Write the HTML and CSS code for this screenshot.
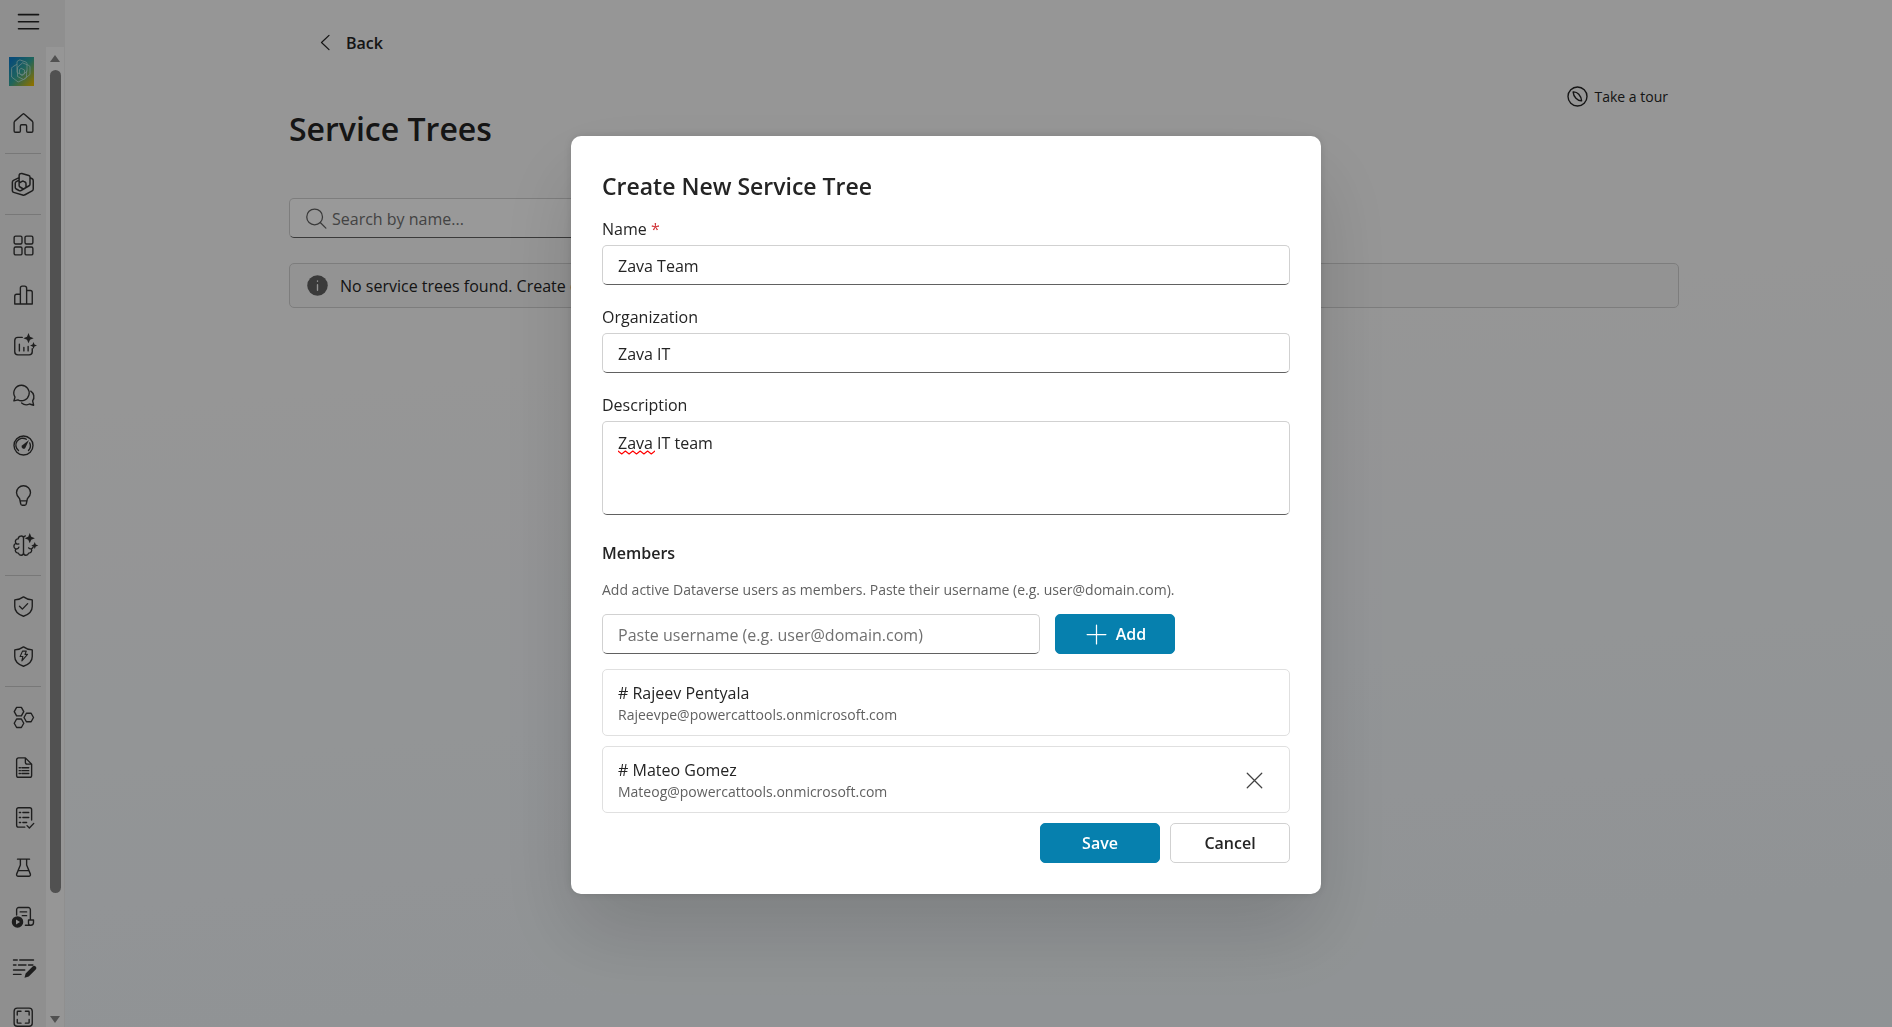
FILE: index.html
```html
<!DOCTYPE html>
<html lang="en">

<head>
    <meta charset="UTF-8">
    <meta name="viewport" content="width=device-width, initial-scale=1.0">
    <title>Service Trees</title>
    <link rel="stylesheet" href="styles.css">
</head>

<body>
    <div class="app">
        <nav class="rail" aria-label="Main">
            <button class="rail-menu" type="button" aria-label="Menu">
                <svg class="icon" viewBox="0 0 20 20"><path d="M2 4.500h16M2 10.200h16M2 15.800h16" stroke-width="1.300"/></svg>
            </button>
            <div class="rail-body">
                <div class="rail-items">
                    <a class="rail-item rail-logo" href="#" aria-label="App">
                        <svg class="logo" viewBox="0 0 25 29">
                            <defs>
                                <linearGradient id="logoFill" x1="0" y1="0" x2="1" y2="1">
                                    <stop offset="0.1" stop-color="#0f7fc8"/>
                                    <stop offset="0.5" stop-color="#35a89a"/>
                                    <stop offset="0.95" stop-color="#e8bc00"/>
                                </linearGradient>
                            </defs>
                            <rect width="25" height="29" fill="url(#logoFill)" stroke="none"/>
                            <path d="M9.500 3.500q1-.8 2-.4l5.500 2q1 .4 1 1.400v8l-5 3.500-5-2.500V5zM14 6l6 2.500q1 .5 1 1.500v7.500l-6.500 5-6-3V11q0-1 .8-1.600zM7.500 7.500L3.500 10q-.9.600-.9 1.600V20l6.500 5 7.500-3.500q.9-.5.900-1.500v-6M12.500 11.500l3 1.500v4l-2.500 1.500-2.500-2v-3.500z" stroke="#b5e2dc" stroke-width="0.8"/>
                        </svg>
                    </a>
                    <a class="rail-item" href="#" aria-label="Home">
                        <svg class="icon" viewBox="0 0 20 20"><path d="M9.300 2.600a1 1 0 0 1 1.400 0l6.300 5.500c.3.300.5.700.5 1.100V16a1 1 0 0 1-1 1h-3a1 1 0 0 1-1-1v-4a1 1 0 0 0-1-1h-3a1 1 0 0 0-1 1v4a1 1 0 0 1-1 1h-3a1 1 0 0 1-1-1V9.200c0-.4.2-.8.5-1.100z"/></svg>
                    </a>
                    <hr class="rail-line">
                    <a class="rail-item rail-left" href="#" aria-label="Copilot Studio">
                        <svg class="icon" viewBox="0 0 20 20"><path stroke-width="1.200" d="M9.500 1.200l5.500 1.600q1 .3 1 1.300v5.600q0 .9-.7 1.300l-3.800 2.200q-.8.400-1.500 0L8 12q-.7-.4-.7-1.200V3q0-2 2.200-1.800zM16 4.500l1.700.9q.9.500.9 1.500v6.700q0 1-.9 1.500L12 18.200q-.9.500-1.900.2L2.900 16.300q-1-.3-1-1.300V8.200q0-1 .9-1.500l4.500-2.200M7.300 6.500L5 7.700q-.8.400-.8 1.300v3.300q0 .9.800 1.300l2.200 1.200q.8.400 1.600 0l3.200-1.700q.8-.4.800-1.300V9.300q0-.9-.8-1.300l-1-.5q-.7-.4-1.400 0l-2.300 1.300"/></svg>
                    </a>
                    <hr class="rail-line">
                    <a class="rail-item" href="#" aria-label="Dashboard">
                        <svg class="icon" viewBox="0 0 20 20"><rect x="2.500" y="2.500" width="6.300" height="6.300" rx="1.200"/><rect x="11.200" y="2.500" width="6.300" height="6.300" rx="1.200"/><rect x="2.500" y="11.200" width="6.300" height="6.300" rx="1.200"/><rect x="11.200" y="11.200" width="6.300" height="6.300" rx="1.200"/></svg>
                    </a>
                    <a class="rail-item" href="#" aria-label="Analytics">
                        <svg class="icon" viewBox="0 0 20 20"><path d="M7.500 16.800V4a1.500 1.500 0 0 1 1.500-1.500h2A1.500 1.500 0 0 1 12.500 4v12.800M7.500 9H4.500A1.500 1.500 0 0 0 3 10.500v6.300h14V7.500A1.500 1.500 0 0 0 15.500 6h-3"/></svg>
                    </a>
                    <a class="rail-item" href="#" aria-label="Insights">
                        <svg class="icon" viewBox="0 0 20 20"><path d="M9 3.500H5.500A2.500 2.500 0 0 0 3 6v9a2.500 2.500 0 0 0 2.500 2.500h9A2.500 2.500 0 0 0 17 15v-2.500M6.700 9v5.300M10.300 11.500v2.800M13.700 10.700v3.600"/><path class="solid" d="M14 0l1.200 2.900 2.900 1.200-2.900 1.200L14 8.200l-1.200-2.900-2.900-1.200 2.900-1.200zM18 7.200l.8 2 2 .8-2 .8-.8 2-.8-2-2-.8 2-.8z"/></svg>
                    </a>
                    <a class="rail-item" href="#" aria-label="Conversations">
                        <svg class="icon" viewBox="0 0 20 20"><path d="M8.500 1.800a6.200 6.200 0 1 1-3 11.700l-3.200.8.900-3A6.200 6.200 0 0 1 8.500 1.800zM15.800 6.500a5.500 5.500 0 0 1 1.500 7.800l.8 3.500-3.300-1a5.800 5.800 0 0 1-6.300-.8"/></svg>
                    </a>
                    <a class="rail-item" href="#" aria-label="Performance">
                        <svg class="icon" viewBox="0 0 20 20"><circle cx="10" cy="10" r="7.600"/><path d="M6 14a5.500 5.500 0 0 1 6.300-9M15 8a5.500 5.500 0 0 1-1 6"/><path class="solid" d="M14.400 5.600l-3 6.300a1.500 1.500 0 0 1-2.600-1.900z"/></svg>
                    </a>
                    <a class="rail-item" href="#" aria-label="Ideas">
                        <svg class="icon" viewBox="0 0 20 20"><path d="M10 2.200a5.600 5.600 0 0 1 5.600 5.600c0 1.900-1 3.300-2.500 4.800l-.9 4.200a1.200 1.200 0 0 1-1.200 1H9a1.200 1.200 0 0 1-1.200-1l-.9-4.200C5.400 11.100 4.400 9.700 4.400 7.800A5.600 5.600 0 0 1 10 2.200zM7.300 14.300h5.400"/></svg>
                    </a>
                    <a class="rail-item" href="#" aria-label="AI">
                        <svg class="icon" viewBox="0 0 20 20"><path d="M10 3.800C9.500 1.800 6 2 5.700 4.700 3.500 4.700 3 7 4 8.300 1.800 9 1.800 12 3.700 12.700c-.8 1.900.4 3.500 2.200 3.400.8 2.400 4.100 2.200 4.100-.4zM10 15.700c0 2.600 3.300 2.800 4.100.4 1.800.1 3-1.500 2.200-3.400.8-.3 1.300-.9 1.500-1.700M10 3.800c.2-.8.800-1.300 1.500-1.500M4 8.300c.6.500 1.500.7 2.300.4M3.700 12.700c1.200.2 2.300-.3 2.600-1.400M16.300 12.700c-.9.100-1.700-.2-2.200-.8"/><path class="solid" d="M15 0l1.200 2.900 2.900 1.200-2.900 1.200L15 8.200l-1.200-2.900-2.900-1.200 2.900-1.200zM19 7.200l.8 2 2 .8-2 .8-.8 2-.8-2-2-.8 2-.8z"/></svg>
                    </a>
                    <hr class="rail-line">
                    <a class="rail-item" href="#" aria-label="Security">
                        <svg class="icon" viewBox="0 0 20 20"><path d="M10 2.300c2 1.500 4.300 2.200 7 2.400V10c0 4-2.500 6.300-7 7.800C5.500 16.300 3 14 3 10V4.700c2.700-.2 5-.9 7-2.400zM6.800 9.800l2.300 2.300 4.200-4.400"/></svg>
                    </a>
                    <a class="rail-item" href="#" aria-label="Threats">
                        <svg class="icon" viewBox="0 0 20 20"><path d="M10 2.300c2 1.500 4.300 2.200 7 2.400V10c0 4-2.500 6.300-7 7.800C5.500 16.300 3 14 3 10V4.700c2.700-.2 5-.9 7-2.400z"/><path stroke-width="0.9" d="M9.200 5.700h3l-1 2.600h2l-4.500 5.200.8-3.500H7.300z"/></svg>
                    </a>
                    <hr class="rail-line">
                    <a class="rail-item" href="#" aria-label="Environments">
                        <svg class="icon" viewBox="0 0 20 20"><path d="M4.500 1.900h3.800l1.900 3.400-1.900 3.400H4.500L2.600 5.300zM4.500 11.200h3.800l1.900 3.400-1.900 3.400H4.500l-1.900-3.400zM12.300 6.600h3.800L18 10l-1.900 3.400h-3.800L10.400 10z"/></svg>
                    </a>
                    <a class="rail-item" href="#" aria-label="Documents">
                        <svg class="icon" viewBox="0 0 20 20"><path d="M11.500 2.300H6A1.500 1.500 0 0 0 4.500 3.800v12.500A1.500 1.500 0 0 0 6 17.800h9a1.500 1.500 0 0 0 1.500-1.500V7.300zM11.500 2.300v3.500A1.500 1.500 0 0 0 13 7.300h3.500M6.500 10.200h1M6.500 12.500h1M6.500 14.800h1M8.700 10.200h5.500M8.700 12.500h5.500M8.700 14.800h5.500"/></svg>
                    </a>
                    <a class="rail-item" href="#" aria-label="Tasks">
                        <svg class="icon" viewBox="0 0 20 20"><path d="M16.500 12V3.700A1.500 1.500 0 0 0 15 2.200H6a1.500 1.500 0 0 0-1.500 1.500v12.500A1.500 1.500 0 0 0 6 17.700h5M6.700 6h1M6.700 10h1M6.700 14h1M9.500 6h4.700M9.500 10h4.700M9.500 14h3M12.800 16.500l1.900 1.900 3.500-3.700"/></svg>
                    </a>
                    <a class="rail-item" href="#" aria-label="Experiments">
                        <svg class="icon" viewBox="0 0 20 20"><path d="M5.200 3.300h9.600M7.500 3.300V8l-3 7.300A1.300 1.300 0 0 0 5.700 17h8.600a1.300 1.300 0 0 0 1.200-1.700l-3-7.300V3.300M5.900 12.500h8.200"/></svg>
                    </a>
                    <a class="rail-item" href="#" aria-label="Runs">
                        <svg class="icon" viewBox="0 0 20 20"><path d="M4.500 8V3.700A1.700 1.700 0 0 1 6.200 2h7.600a1.700 1.700 0 0 1 1.700 1.700V12M7.300 5.500h5.200M9 8.500h3.500M11.500 16.200h4.300a2.200 2.200 0 0 0 2.200-2.200V12h-4v2.500a1.700 1.700 0 0 0 1.800 1.700"/><circle class="solid" cx="5.200" cy="13.500" r="4.600"/><path class="play" d="M4 11.500v4l3.200-2z"/></svg>
                    </a>
                    <a class="rail-item" href="#" aria-label="Prompts">
                        <svg class="icon" viewBox="0 0 20 20"><path d="M2 4h3M7 4h11M2 8h2M6 8h6M14 8h3.500M2 12h9M2 15.500h6"/><path class="solid" d="M17.300 9.200a1.700 1.700 0 0 1 2.500 2.400l-5.600 5.600-3.400 1 .9-3.400z"/></svg>
                    </a>
                    <a class="rail-item" href="#" aria-label="Solutions">
                        <svg class="icon" viewBox="0 0 20 20"><rect x="2.500" y="2.500" width="14.500" height="14.500" rx="2.500"/><path d="M5 8V5.500a.5.500 0 0 1 .5-.5H8M11.500 5H14a.5.500 0 0 1 .5.500V8M14.500 11.500V14a.5.500 0 0 1-.5.500h-2.500M8 14.500H5.500A.5.500 0 0 1 5 14v-2.500"/></svg>
                    </a>
                </div>
                <div class="scrollbar" aria-hidden="true">
                    <span class="arrow-up"></span>
                    <span class="thumb"></span>
                    <span class="arrow-down"></span>
                </div>
            </div>
        </nav>

        <main class="main">
            <div class="page">
                <button class="back" type="button">
                    <svg class="icon" viewBox="0 0 20 20"><path d="M12 4.300L6 10l6 5.700" stroke-width="1"/></svg>
                    Back
                </button>
                <button class="tour" type="button">
                    <svg class="icon" viewBox="0 0 20 20"><circle cx="10" cy="10" r="7.600"/><path d="M6.500 6.300c3.500-.3 6.300 3 6.800 7.200-3.400.2-6.500-3.200-6.800-7.200z"/></svg>
                    Take a tour
                </button>
                <h1 class="page-title">Service Trees</h1>
                <label class="search">
                    <svg class="icon" viewBox="0 0 20 20"><circle cx="8.500" cy="8.700" r="6.300" stroke-width="1"/><path d="M13 13.200l4.500 4.500" stroke-width="1"/></svg>
                    <input type="search" placeholder="Search by name..." aria-label="Search by name">
                </label>
                <div class="message">
                    <svg class="icon" viewBox="0 0 20 20"><circle class="solid" cx="10" cy="10" r="8.200"/><path class="info" d="M10 9.300v4.500M10 6.300v.3"/></svg>
                    No service trees found. Create one to get started.
                </div>
            </div>
        </main>
    </div>

    <div class="overlay">
        <form class="dialog" role="dialog" aria-labelledby="dialogTitle" onsubmit="event.preventDefault();">
            <h2 class="dialog-title" id="dialogTitle">Create New Service Tree</h2>

            <div class="field">
                <label for="name">Name <span class="required">*</span></label>
                <input class="input" type="text" id="name" value="Zava Team" spellcheck="false">
            </div>
            <div class="field">
                <label for="organization">Organization</label>
                <input class="input" type="text" id="organization" value="Zava IT" spellcheck="false">
            </div>
            <div class="field field-area">
                <label for="description">Description</label>
                <textarea class="input" id="description" spellcheck="false">Zava IT team</textarea>
                <svg class="squiggle" viewBox="0 0 37 5" aria-hidden="true"><path d="M0 1l3.700 3 3.700-3 3.700 3 3.700-3 3.700 3 3.700-3 3.700 3 3.700-3 3.700 3 3.700-3"/></svg>
            </div>

            <h3 class="members-title">Members</h3>
            <label class="hint" for="username">Add active Dataverse users as members. Paste their username (e.g. user@domain.com).</label>
            <div class="add-row">
                <input class="input" type="text" id="username" placeholder="Paste username (e.g. user@domain.com)">
                <button class="btn btn-primary" type="button">
                    <svg class="icon" viewBox="0 0 20 20"><path d="M10 2.500v15M2.500 10h15" stroke-width="1"/></svg>
                    Add
                </button>
            </div>

            <ul class="members">
                <li class="member">
                    <div>
                        <div class="member-name"># Rajeev Pentyala</div>
                        <div class="member-mail">Rajeevpe@powercattools.onmicrosoft.com</div>
                    </div>
                </li>
                <li class="member">
                    <div>
                        <div class="member-name"># Mateo Gomez</div>
                        <div class="member-mail">Mateog@powercattools.onmicrosoft.com</div>
                    </div>
                    <button class="remove" type="button" aria-label="Remove Mateo Gomez">
                        <svg class="icon" viewBox="0 0 20 20"><path d="M4.200 4.200l11.600 11.600M15.800 4.200L4.200 15.800" stroke-width="1"/></svg>
                    </button>
                </li>
            </ul>

            <div class="actions">
                <button class="btn btn-primary" type="submit">Save</button>
                <button class="btn" type="button">Cancel</button>
            </div>
        </form>
    </div>
</body>

</html>
```
FILE: styles.css
```css
* {
    box-sizing: border-box;
}

body {
    margin: 0;
    font-family: "Open Sans", "Noto Sans", sans-serif;
    font-size: 16px;
    line-height: 24px;
    color: #242424;
    overflow: hidden;
}

button, input, textarea {
    font: inherit;
    color: inherit;
    margin: 0;
}

button {
    border: none;
    background: none;
    padding: 0;
    cursor: pointer;
}

.icon {
    width: 25px;
    height: 25px;
    flex: none;
    overflow: visible;
}

svg {
    fill: none;
    stroke: currentColor;
    stroke-width: 1.1;
    stroke-linecap: round;
    stroke-linejoin: round;
}

svg .solid {
    fill: currentColor;
    stroke-width: 0;
}

svg .play {
    fill: #eee;
    stroke: none;
}

svg .info {
    stroke: #f5f5f5;
}

.app {
    display: flex;
    height: 100vh;
    background: linear-gradient(175deg, #fafafa 35%, #f5f8fb 65%, #eff5f8 100%);
}

/* left navigation */
.rail {
    width: 65px;
    flex: none;
    display: flex;
    flex-direction: column;
    background: #eee;
}

.rail-menu {
    height: 47px;
    flex: none;
    padding: 0 0 4px 16px;
    display: flex;
    align-items: center;
}

.rail-body {
    flex: 1;
    min-height: 0;
    display: flex;
}

.rail-items {
    flex: 1;
    overflow: hidden;
}

.rail-item {
    display: flex;
    align-items: center;
    height: 50px;
    padding-left: 11px;
    color: #333;
}

.rail-logo {
    height: 51px;
    padding: 0 0 3px 9px;
}

.rail-left {
    padding-left: 10px;
}

.logo {
    width: 25px;
    height: 29px;
}

.rail-line {
    height: 1px;
    margin: 5px;
    border: none;
    background: #c8c8c8;
}

.scrollbar {
    width: 19px;
    padding: 8px 0 4px;
    display: flex;
    flex-direction: column;
    align-items: center;
    gap: 8px;
    background: #fafafa;
    border-right: 1px solid #eee;
}

.arrow-up, .arrow-down {
    border: 5px solid transparent;
}

.arrow-up {
    border-top: none;
    border-bottom: 7px solid #888;
}

.arrow-down {
    border-bottom: none;
    border-top: 7px solid #888;
    margin-top: auto;
}

.thumb {
    width: 11px;
    height: 85%;
    border-radius: 6px;
    background: #888;
}

/* page behind the dialog */
.main {
    flex: 1;
    padding-left: 11px;
}

.page {
    max-width: 1390px;
    margin: 0 auto;
    display: flex;
    flex-direction: column;
    align-items: flex-start;
}

.back {
    display: flex;
    align-items: center;
    gap: 7px;
    margin: 30px 0 0 25px;
    font-weight: 600;
}

.tour {
    display: flex;
    align-items: center;
    gap: 5px;
    align-self: flex-end;
    margin: 29px 11px 0 0;
    font-size: 14px;
}

.page-title {
    margin: -4px 0 45px;
    font-size: 32px;
    line-height: 48px;
    font-weight: 600;
}

.search {
    width: 375px;
    height: 40px;
    display: flex;
    align-items: center;
    gap: 3px;
    padding: 0 14px;
    background: #fff;
    border: 1px solid #d1d1d1;
    border-bottom-color: #616161;
    border-radius: 5px;
    color: #616161;
}

.search input {
    flex: 1;
    min-width: 0;
    border: none;
    padding: 2px 0 0;
    background: none;
}

::placeholder {
    color: #707070;
    opacity: 1;
}

.message {
    align-self: stretch;
    display: flex;
    align-items: center;
    gap: 10px;
    height: 45px;
    margin-top: 25px;
    padding: 0 15px;
    background: #f5f5f5;
    border: 1px solid #d1d1d1;
    border-radius: 5px;
}

.message .icon {
    color: #616161;
}

/* dialog */
.overlay {
    position: fixed;
    inset: 0;
    padding-top: 3px;
    display: flex;
    align-items: center;
    justify-content: center;
    background: rgba(0, 0, 0, 0.4);
}

.dialog {
    width: 750px;
    max-width: 100%;
    padding: 31px;
    background: #fff;
    border-radius: 10px;
    box-shadow: 0 0 10px rgba(0, 0, 0, 0.12), 0 40px 80px rgba(0, 0, 0, 0.14);
}

.dialog-title {
    margin: 0 0 13px;
    padding-top: 1px;
    font-size: 23px;
    line-height: 36px;
    font-weight: 600;
}

.field {
    display: flex;
    flex-direction: column;
    gap: 4px;
    margin-bottom: 20px;
}

.field-area {
    position: relative;
    margin-bottom: 26px;
}

.required {
    color: #d13438;
}

.input {
    width: 100%;
    height: 40px;
    padding: 2px 15px 0;
    background: #fff;
    border: 1px solid #d1d1d1;
    border-bottom-color: #616161;
    border-radius: 5px;
    outline: none;
}

textarea.input {
    display: block;
    height: 94px;
    padding: 9px 15px;
    resize: none;
}

.squiggle {
    position: absolute;
    left: 16px;
    top: 57px;
    width: 37px;
    height: 5px;
    stroke: #f00;
}

.members-title {
    margin: 0 0 15px;
    font-size: 16px;
    line-height: 24px;
    font-weight: 600;
}

.hint {
    display: block;
    margin-bottom: 14px;
    font-size: 14px;
    line-height: 20px;
    color: #616161;
}

.add-row {
    display: flex;
    gap: 15px;
    margin-right: 115px;
}

.btn {
    width: 120px;
    height: 40px;
    flex: none;
    display: flex;
    align-items: center;
    justify-content: center;
    gap: 7px;
    border: 1px solid #d1d1d1;
    border-radius: 5px;
    font-weight: 600;
}

.btn-primary {
    background: #0680ae;
    border-color: #0680ae;
    color: #fff;
}

.members {
    list-style: none;
    margin: 15px 0 10px;
    padding: 0;
    display: flex;
    flex-direction: column;
    gap: 10px;
}

.member {
    display: flex;
    align-items: center;
    justify-content: space-between;
    height: 67px;
    padding: 1px 15px 0;
    border: 1px solid #e0e0e0;
    border-radius: 5px;
}

.member-mail {
    font-size: 14px;
    line-height: 20px;
    color: #616161;
}

.remove {
    display: flex;
    padding: 0 7px;
    color: #424242;
}

.actions {
    display: flex;
    justify-content: flex-end;
    gap: 10px;
}
```
